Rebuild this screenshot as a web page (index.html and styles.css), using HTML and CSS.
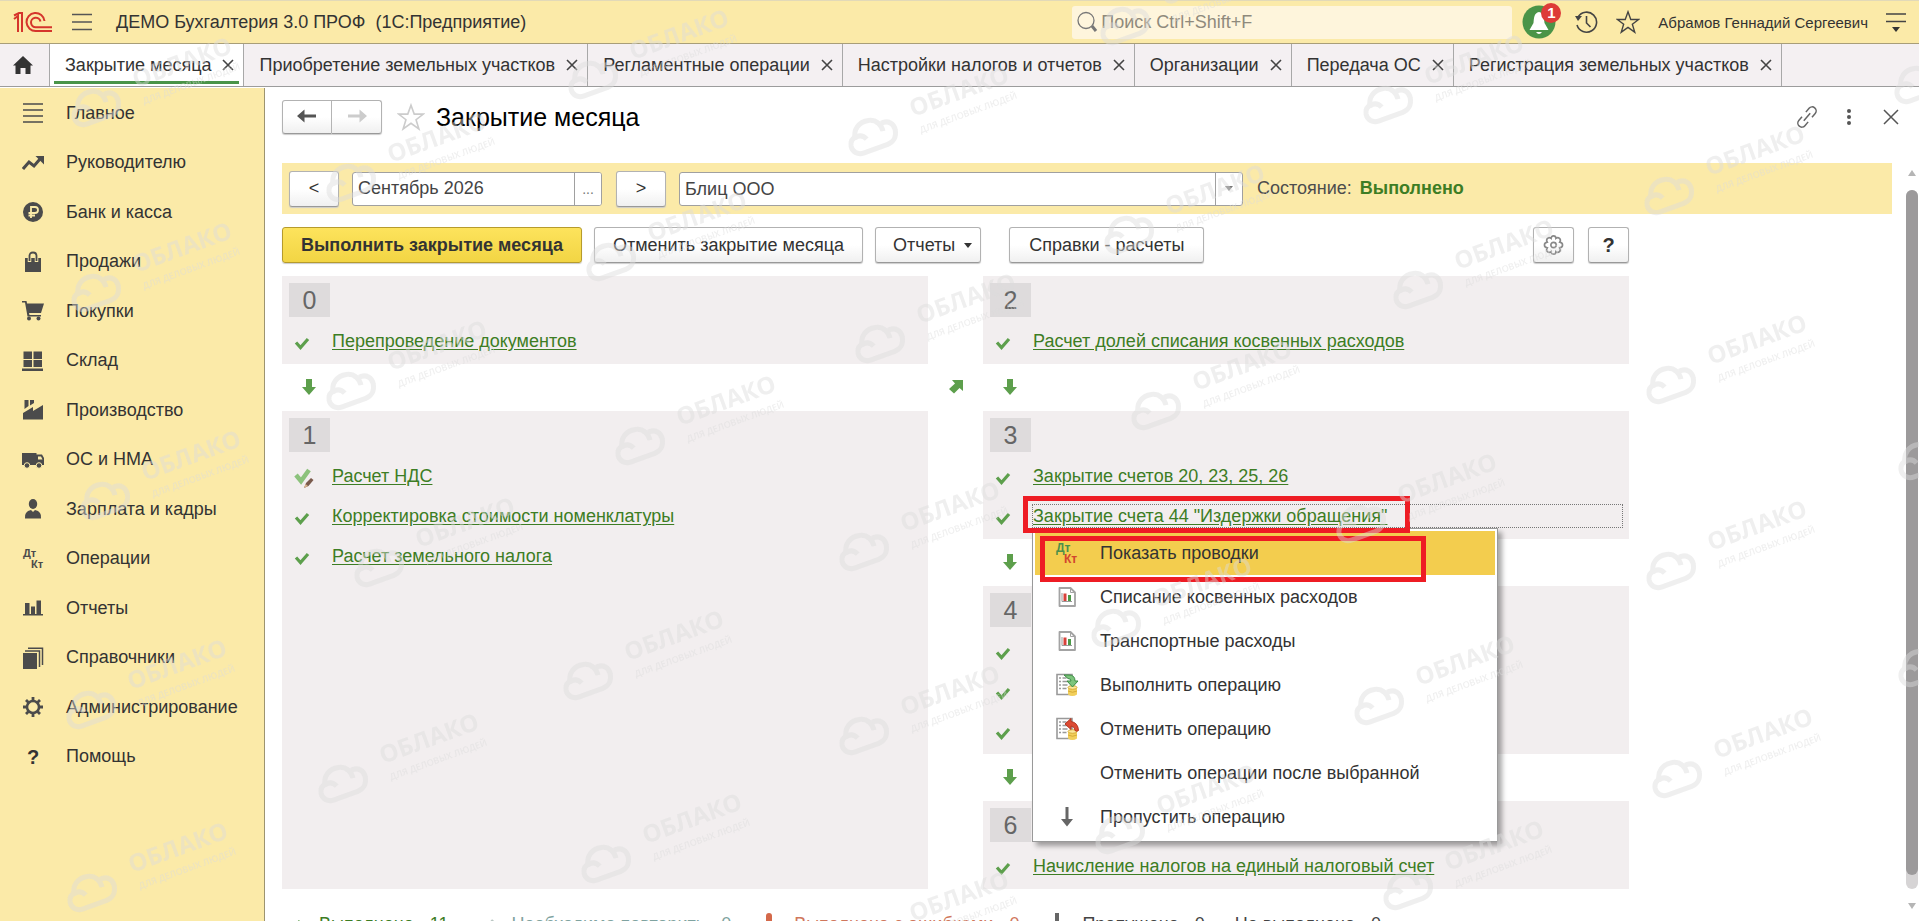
FILE: index.html
```html
<!DOCTYPE html>
<html lang="ru">
<head>
  <meta charset="UTF-8">
  <meta name="viewport" content="width=device-width, initial-scale=1.0">
  <title>Закрытие месяца - ДЕМО Бухгалтерия 3.0 ПРОФ</title>
  <link rel="stylesheet" href="styles.css">
</head>
<body>
  <!-- shared icons -->
  <svg class="sprite" aria-hidden="true">
    <symbol id="i-check" viewBox="0 0 16 16"><path d="M2 7.500l4.500 5L14 4" fill="none" stroke="#5d9f4c" stroke-width="3.200"/></symbol>
    <symbol id="i-down" viewBox="0 0 16 18"><path d="M5 1h6v8h4l-7 8-7-8h4z" fill="#5d9f4c"/></symbol>
    <symbol id="i-close" viewBox="0 0 12 12"><path d="M1 1l10 10M11 1L1 11" fill="none" stroke="#444" stroke-width="1.600"/></symbol>
    <symbol id="i-star" viewBox="0 0 26 26"><path d="M13 2l3 8.300h8.500l-6.800 5.200 2.600 8.500-7.300-5.200-7.300 5.200 2.600-8.500L1.500 10.300H10z" fill="none" stroke="currentColor" stroke-width="1.500"/></symbol>
    <symbol id="i-report" viewBox="0 0 24 24"><path d="M4.500 3h11l4.500 4.500V21H4.500z" fill="#fff" stroke="#a3a3a3" stroke-width="1.800" stroke-linejoin="round"/><path d="M15.500 3v4.500H20" fill="none" stroke="#a3a3a3"/><path d="M7 8v8.500h10" fill="none" stroke="#999"/><path d="M8.500 8.500h3V16h-3z" fill="#d8423b"/><path d="M13 10h3v6h-3z" fill="#4c9a48"/></symbol>
    <symbol id="i-sheet" viewBox="0 0 24 24"><path d="M2 1.500h15v20H2z" fill="#fff" stroke="#999" stroke-width="1.600"/><path d="M4 5h2M4 8.500h2M4 12h2M4 15.500h2M7.500 5h4M7.500 8.500h5M7.500 12h5M7.500 15.500h4" stroke="#999" stroke-width="1.300"/><path d="M13 14.500h9v7q-4.500 3-9 0z" fill="#f2cf5b"/><ellipse cx="17.500" cy="14.500" rx="4.500" ry="1.800" fill="#fbe79b" stroke="#d6ab36"/><path d="M13 18q4.500 2.500 9 0" fill="none" stroke="#d6ab36"/></symbol>
  </svg>

  <header class="titlebar">
    <svg class="logo" viewBox="0 0 40 21" width="40" height="21"><g fill="none" stroke="#d5352c" stroke-width="2"><path d="M1 7l4-3v16M1 3.500L6 1h3v19"/><path d="M31.500 9A9 9 0 1 0 23 19h16"/><path d="M27.500 9.500A4.800 4.800 0 1 0 23 15.300h16"/></g></svg>
    <button class="icon-btn burger" aria-label="Меню"><svg width="20" height="18" viewBox="0 0 20 18"><path d="M0 1.500h20M0 9h20M0 16.500h20" stroke="#555" stroke-width="1.600"/></svg></button>
    <span class="app-name">ДЕМО Бухгалтерия 3.0 ПРОФ&nbsp; (1С:Предприятие)</span>
    <label class="search">
      <svg width="22" height="22" viewBox="0 0 22 22"><circle cx="10" cy="9.500" r="8" fill="none" stroke="#777" stroke-width="1.300"/><path d="M16 15l4 5" stroke="#777" stroke-width="3"/></svg>
      <input type="text" placeholder="Поиск Ctrl+Shift+F" aria-label="Поиск">
    </label>
    <div class="tools">
      <button class="icon-btn bell" aria-label="Уведомления">
        <svg width="34" height="34" viewBox="0 0 34 34"><circle cx="17" cy="17" r="16.500" fill="#4a9448"/><path d="M17 7c5 1 5 6 5.500 11l4 7H7.500l4-7C12 13 12 8 17 7zM14 27h6q-3 4-6 0z" fill="#fff"/></svg>
        <span class="bell-count">1</span>
      </button>
      <button class="icon-btn" aria-label="История"><svg width="24" height="24" viewBox="0 0 24 24"><path d="M4 7a10 10 0 1 1-1 8M12.500 6v7l4 4" fill="none" stroke="#444" stroke-width="1.600"/><path d="M1 6h7l-4 5z" fill="#444"/></svg></button>
      <button class="icon-btn" aria-label="Избранное"><svg width="24" height="24"><use href="#i-star"/></svg></button>
      <a class="user" href="#">Абрамов Геннадий Сергеевич</a>
      <button class="icon-btn" aria-label="Сервис"><svg width="20" height="20" viewBox="0 0 20 20"><path d="M0 2h20M0 9.500h20" stroke="#444" stroke-width="1.600"/><path d="M6 15h8l-4 5z" fill="#333"/></svg></button>
    </div>
  </header>

  <nav class="tabs">
    <a class="home" href="#" aria-label="Начальная страница"><svg width="20" height="18" viewBox="0 0 20 18"><path d="M10 0l10 9.500h-2.500V18H12.500v-6h-5v6h-5V9.500H0z" fill="#333"/></svg></a>
    <a class="tab active" href="#">Закрытие месяца<svg><use href="#i-close"/></svg></a>
    <a class="tab" href="#">Приобретение земельных участков<svg><use href="#i-close"/></svg></a>
    <a class="tab" href="#">Регламентные операции<svg><use href="#i-close"/></svg></a>
    <a class="tab" href="#">Настройки налогов и отчетов<svg><use href="#i-close"/></svg></a>
    <a class="tab" href="#">Организации<svg><use href="#i-close"/></svg></a>
    <a class="tab" href="#">Передача ОС<svg><use href="#i-close"/></svg></a>
    <a class="tab" href="#">Регистрация земельных участков<svg><use href="#i-close"/></svg></a>
  </nav>

  <div class="workspace">
    <nav class="sidebar">
      <a href="#"><svg viewBox="0 0 22 22"><path d="M1 2h20M1 8h20M1 14h20M1 20h20" stroke="#4b4b4b" stroke-width="1.500"/></svg>Главное</a>
      <a href="#"><svg viewBox="0 0 22 22"><path d="M1 17l6-7 5 4 6-7" fill="none" stroke="#4b4b4b" stroke-width="3"/><path d="M13.500 4H22v8.500z" fill="#4b4b4b"/></svg>Руководителю</a>
      <a href="#"><svg viewBox="0 0 22 22"><circle cx="11" cy="11" r="10" fill="#4b4b4b"/><path d="M9 17V6h4a3 3 0 0 1 0 6H6.500M6.500 14.500H13" fill="none" stroke="#fbeba9" stroke-width="1.800"/></svg>Банк и касса</a>
      <a href="#"><svg viewBox="0 0 22 22"><path d="M3 7h16v14H3z" fill="#4b4b4b"/><path d="M7.500 11V5q0-3.500 3.500-3.500T14.500 5v6" fill="none" stroke="#fbeba9" stroke-width="3.500"/><path d="M7.500 10V5q0-3.500 3.500-3.500T14.500 5v5" fill="none" stroke="#4b4b4b" stroke-width="1.800"/></svg>Продажи</a>
      <a href="#"><svg viewBox="0 0 22 22"><path d="M0 1h4.500l.6 2.500H22L19 13H7l.5 2H19v1.500H5.500L3 2.500H0z" fill="#4b4b4b"/><circle cx="7" cy="18.500" r="2" fill="#4b4b4b"/><circle cx="16.500" cy="18.500" r="2" fill="#4b4b4b"/></svg>Покупки</a>
      <a href="#"><svg viewBox="0 0 22 22"><path d="M1.500 1.500h8.500V9H1.500zM11.500 1.500H20V9h-8.500zM1.500 10h8.500v7H1.500zM11.500 10H20v7h-8.500zM0 18.500h21V21H0z" fill="#4b4b4b"/></svg>Склад</a>
      <a href="#"><svg viewBox="0 0 22 22"><path d="M1 20.500V14l10-6v4l10-6v14.500zM2.500 1h4v6l-4 3zM8 1h4v3L8 6.500z" fill="#4b4b4b"/></svg>Производство</a>
      <a href="#"><svg viewBox="0 0 22 22"><path d="M0 4h14.500v12H0zM14 5.500h6L22 9v7h-8z" fill="#4b4b4b"/><path d="M16 7.500h3l1.500 3H16z" fill="#fbeba9"/><circle cx="5" cy="16.500" r="2.800" fill="#4b4b4b" stroke="#fbeba9"/><circle cx="17" cy="16.500" r="2.800" fill="#4b4b4b" stroke="#fbeba9"/></svg>ОС и НМА</a>
      <a href="#"><svg viewBox="0 0 22 22"><ellipse cx="11" cy="6" rx="4.200" ry="5" fill="#4b4b4b"/><path d="M3 20.500q-1-7 6-8.500l2 2 2-2q7 1.500 6 8.500z" fill="#4b4b4b"/></svg>Зарплата и кадры</a>
      <a href="#"><svg viewBox="0 0 22 22" class="dtkt"><text x="1" y="9">Дт</text><text x="9" y="20">Кт</text></svg>Операции</a>
      <a href="#"><svg viewBox="0 0 22 22"><path d="M1 17h20v1.500H1zM3 6h4.500v11H3zM9 9.500h4V17H9zM14.500 3.500H19V17h-4.500z" fill="#4b4b4b"/></svg>Отчеты</a>
      <a href="#"><svg viewBox="0 0 22 22"><path d="M1 6h14v16H1z" fill="#4b4b4b"/><path d="M3 4h14.500v16M6 1.200h14.500V18" fill="none" stroke="#4b4b4b" stroke-width="1.500"/></svg>Справочники</a>
      <a href="#"><svg viewBox="0 0 22 22"><circle cx="11" cy="11" r="6" fill="none" stroke="#4b4b4b" stroke-width="2.500"/><path d="M11 1v4M11 17v4M1 11h4M17 11h4M4 4l2.500 2.500M15.500 15.500L18 18M18 4l-2.500 2.500M6.500 15.500L4 18" stroke="#4b4b4b" stroke-width="2.800"/></svg>Администрирование</a>
      <a href="#"><span class="help-mark">?</span>Помощь</a>
    </nav>

    <main class="page">
      <div class="page-head">
        <div class="history-btns">
          <button class="btn" aria-label="Назад"><svg width="20" height="14" viewBox="0 0 20 14"><path d="M0 7l7.500-6.500V5.500H19v3H7.500v5z" fill="#555"/></svg></button>
          <button class="btn" aria-label="Вперед" disabled><svg width="20" height="14" viewBox="0 0 20 14"><path d="M20 7l-7.500-6.500V5.500H1v3h11.500v5z" fill="#ccc"/></svg></button>
        </div>
        <svg class="fav" width="28" height="28"><use href="#i-star"/></svg>
        <h1>Закрытие месяца</h1>
        <div class="page-actions">
          <button class="icon-btn" aria-label="Ссылка"><svg width="22" height="22" viewBox="0 0 22 22"><g fill="none" stroke="#666" stroke-width="1.500" transform="rotate(-50 11 11)"><path d="M8 7H3a4 4 0 0 0 0 8h5M14 7h5a4 4 0 0 1 0 8h-5M6 11h10"/></g></svg></button>
          <button class="icon-btn" aria-label="Еще"><svg width="22" height="22" viewBox="0 0 22 22"><g fill="#555"><circle cx="11" cy="5" r="2"/><circle cx="11" cy="11" r="2"/><circle cx="11" cy="17" r="2"/></g></svg></button>
          <button class="icon-btn" aria-label="Закрыть"><svg width="22" height="22" viewBox="0 0 22 22"><path d="M4 4l14 14M18 4L4 18" stroke="#555" stroke-width="1.500"/></svg></button>
        </div>
      </div>

      <div class="period-bar">
        <button class="btn step">&lt;</button>
        <div class="field period">
          <input type="text" value="Сентябрь 2026" aria-label="Период">
          <button>...</button>
        </div>
        <button class="btn step">&gt;</button>
        <div class="field company">
          <select aria-label="Организация"><option>Блиц ООО</option></select>
          <span class="caret"></span>
        </div>
        <span class="state">Состояние: <b>Выполнено</b></span>
      </div>

      <div class="commands">
        <button class="btn primary">Выполнить закрытие месяца</button>
        <button class="btn">Отменить закрытие месяца</button>
        <button class="btn drop">Отчеты <span class="caret dark"></span></button>
        <button class="btn refs">Справки - расчеты</button>
        <button class="btn square gear" aria-label="Настройки"><svg width="22" height="22" viewBox="0 0 22 22"><g fill="none" stroke="#888" stroke-width="1.700"><circle cx="11" cy="11" r="2.800"/><path d="M8.500 4q0-2.500 2.500-2.500T13.500 4q2-1.500 3.800 0t.2 4q3 .5 3 3t-3 3q1.500 2.500-.2 4t-3.800 0q0 2.500-2.500 2.500T8.500 18q-2 1.500-3.800 0t-.2-4q-3-.5-3-3t3-3q-1.500-2.500.2-4t3.800 0z"/></g></svg></button>
        <button class="btn square"><b>?</b></button>
      </div>

      <div class="steps">
        <div class="col">
          <section class="stage">
            <span class="num">0</span>
            <ul>
              <li><svg><use href="#i-check"/></svg><a href="#">Перепроведение документов</a></li>
            </ul>
          </section>
          <div class="next"><svg><use href="#i-down"/></svg></div>
          <section class="stage grow">
            <span class="num">1</span>
            <ul>
              <li><svg class="edited" viewBox="0 0 20 22"><path d="M2 8l5 6L15 3" fill="none" stroke="#8cc27c" stroke-width="4.500"/><path d="M10 21l2-5 5-5 2.500 2-5 6z" fill="#7a5a4c"/><path d="M10 21l1.500-4 2.500 2z" fill="#d9b28c"/></svg><a href="#">Расчет НДС</a></li>
              <li><svg><use href="#i-check"/></svg><a href="#">Корректировка стоимости номенклатуры</a></li>
              <li><svg><use href="#i-check"/></svg><a href="#">Расчет земельного налога</a></li>
            </ul>
          </section>
        </div>

        <div class="across"><svg width="16" height="16" viewBox="0 0 16 16"><path d="M4 2h11v11l-3.500-3L6 15.500 1 11l6-5.500z" fill="#5d9f4c"/></svg></div>

        <div class="col">
          <section class="stage">
            <span class="num">2</span>
            <ul>
              <li><svg><use href="#i-check"/></svg><a href="#">Расчет долей списания косвенных расходов</a></li>
            </ul>
          </section>
          <div class="next"><svg><use href="#i-down"/></svg></div>
          <section class="stage">
            <span class="num">3</span>
            <ul>
              <li><svg><use href="#i-check"/></svg><a href="#">Закрытие счетов 20, 23, 25, 26</a></li>
              <li class="current">
                <svg><use href="#i-check"/></svg><a href="#">Закрытие счета 44 "Издержки обращения"</a>
                <div class="menu" role="menu">
                  <button class="selected"><svg viewBox="0 0 24 24" class="dtkt color"><text x="1" y="11">Дт</text><text x="9" y="22">Кт</text></svg>Показать проводки</button>
                  <button><svg><use href="#i-report"/></svg>Списание косвенных расходов</button>
                  <button><svg><use href="#i-report"/></svg>Транспортные расходы</button>
                  <button><svg viewBox="0 0 24 24"><use href="#i-sheet"/><path d="M9 2h5q6 0 6 6h3l-5.500 6L12 8h4q0-2.500-3-2.500z" fill="#7cc47c" stroke="#3a8d42"/></svg>Выполнить операцию</button>
                  <button><svg viewBox="0 0 24 24"><use href="#i-sheet"/><path d="M10 7l6-5.500v3q7 1 7.500 9-2 1.500-3.500 0 0-4-4-4.500v3.500z" fill="#dc4a33" stroke="#b5341f"/></svg>Отменить операцию</button>
                  <button><svg></svg>Отменить операции после выбранной</button>
                  <button><svg viewBox="0 0 24 24"><path d="M10.500 2h3v12H18l-6 7.500L6 14h4.500z" fill="#666"/></svg>Пропустить операцию</button>
                </div>
                <span class="mark mark-link"></span>
                <span class="mark mark-item"></span>
              </li>
            </ul>
          </section>
          <div class="next"><svg><use href="#i-down"/></svg></div>
          <section class="stage">
            <span class="num">4</span>
            <ul>
              <li><svg><use href="#i-check"/></svg></li>
              <li><svg><use href="#i-check"/></svg></li>
              <li><svg><use href="#i-check"/></svg></li>
            </ul>
          </section>
          <div class="next"><svg><use href="#i-down"/></svg></div>
          <section class="stage">
            <span class="num">6</span>
            <ul>
              <li><svg><use href="#i-check"/></svg><a href="#">Начисление налогов на единый налоговый счет</a></li>
            </ul>
          </section>
        </div>
      </div>

      <div class="legend">
        <span class="done"><svg><use href="#i-check"/></svg>Выполнено - 11</span>
        <span class="repeat"><svg viewBox="0 0 16 16"><path d="M1 8l5 5 9-10" fill="none" stroke="#b9c6c2" stroke-width="2.500"/></svg>Необходимо повторить - 0</span>
        <span class="error"><svg viewBox="0 0 16 24"><rect x="5" y="0" width="6" height="15" rx="3" fill="#d4694a"/><circle cx="8" cy="20" r="3" fill="#d4694a"/></svg>Выполнено с ошибками - 0</span>
        <span class="skipped"><svg viewBox="0 0 16 24"><path d="M6 0h4v14h4l-6 8-6-8h4z" fill="#666"/></svg>Пропущено - 0</span>
        <span>Не выполнено - 0</span>
      </div>

      <div class="scroll" aria-hidden="true">
        <span class="up"></span>
        <span class="track"><span class="thumb"></span></span>
        <span class="down"></span>
      </div>
    </main>
  </div>

  <svg class="watermark" aria-hidden="true">
    <defs>
      <g id="wm">
        <g fill="none" stroke="#dcdcdc" stroke-width="5" transform="rotate(-20)">
          <path d="M-17-5C-16-16-7-21 2-19c8 2 11 9 10 15"/>
          <path d="M13-12c8-1 12 5 11 11-1 7-6 11-12 11h-25c-7 0-11-5-10-11 2-9 14-9 17-1"/>
        </g>
        <g fill="#dcdcdc" transform="translate(40 -22) rotate(-20)">
          <text class="wm-big">ОБЛАКО</text>
          <text class="wm-small" x="2" y="18">ДЛЯ ДЕЛОВЫХ ЛЮДЕЙ</text>
        </g>
      </g>
    </defs>
    <use href="#wm" x="96" y="110"/><use href="#wm" x="96" y="295"/><use href="#wm" x="105" y="503"/><use href="#wm" x="91" y="712"/><use href="#wm" x="92" y="895"/>
    <use href="#wm" x="351" y="185"/><use href="#wm" x="351" y="393"/><use href="#wm" x="379" y="570"/><use href="#wm" x="343" y="786"/>
    <use href="#wm" x="593" y="82"/><use href="#wm" x="611" y="264"/><use href="#wm" x="640" y="448"/><use href="#wm" x="588" y="683"/><use href="#wm" x="606" y="866"/>
    <use href="#wm" x="873" y="139"/><use href="#wm" x="880" y="346"/><use href="#wm" x="864" y="554"/><use href="#wm" x="864" y="738"/><use href="#wm" x="873" y="944"/>
    <use href="#wm" x="1125" y="28"/><use href="#wm" x="1129" y="237"/><use href="#wm" x="1156" y="413"/><use href="#wm" x="1116" y="630"/><use href="#wm" x="1120" y="837"/>
    <use href="#wm" x="1388" y="107"/><use href="#wm" x="1418" y="292"/><use href="#wm" x="1361" y="526"/><use href="#wm" x="1379" y="708"/><use href="#wm" x="1408" y="893"/>
    <use href="#wm" x="1669" y="198"/><use href="#wm" x="1671" y="387"/><use href="#wm" x="1671" y="573"/><use href="#wm" x="1677" y="781"/>
    <use href="#wm" x="1919" y="87"/><use href="#wm" x="1923" y="463"/><use href="#wm" x="1923" y="670"/>
  </svg>
</body>
</html>
```
FILE: styles.css
```css
* {
  box-sizing: border-box;
  margin: 0;
  padding: 0;
}

body {
  display: flex;
  flex-direction: column;
  height: 100vh;
  overflow: hidden;
  font-family: "Liberation Sans", Arial, sans-serif;
  font-size: 18px;
  color: #333;
  background: #fff;
}

button, input, select {
  font: inherit;
  color: inherit;
}

a {
  color: inherit;
  text-decoration: none;
}

.sprite {
  position: absolute;
  width: 0;
  height: 0;
}

.icon-btn {
  display: flex;
  border: none;
  background: none;
}

/* title bar */
.titlebar {
  display: flex;
  align-items: center;
  flex: none;
  height: 44px;
  padding: 0 13px;
  background: #fbeaa8;
  border-top: 1px solid #e2d9b8;
  border-bottom: 1px solid #a89e78;
}

.burger {
  margin: 0 24px 0 19px;
}

.app-name {
  white-space: nowrap;
}

.search {
  display: flex;
  align-items: center;
  gap: 3px;
  width: 440px;
  height: 33px;
  margin-left: auto;
  padding-left: 4px;
  background: #fef5dc;
  border-radius: 3px;
}

.search input {
  flex: 1;
  min-width: 0;
  border: none;
  background: none;
}

.search input::placeholder {
  color: #8f8a7c;
}

.tools {
  display: flex;
  align-items: center;
  gap: 18px;
  margin-left: 10px;
  color: #444;
}

.bell {
  position: relative;
}

.bell-count {
  position: absolute;
  top: -2px;
  right: -5px;
  width: 20px;
  height: 20px;
  border-radius: 50%;
  background: #dd3b38;
  color: #fff;
  font-size: 15px;
  font-weight: bold;
  line-height: 20px;
}

.user {
  font-size: 15px;
  color: #333;
  white-space: nowrap;
}

/* tabs */
.tabs {
  display: flex;
  flex: none;
  height: 43px;
  background: #f4f0f2;
  border-bottom: 1px solid #9c9c9c;
}

.home {
  display: flex;
  align-items: center;
  justify-content: center;
  width: 50px;
  padding-right: 4px;
  border-right: 1px solid #a8a8a8;
}

.tab {
  position: relative;
  display: flex;
  align-items: center;
  gap: 11px;
  padding: 0 9px 0 15px;
  border-right: 1px solid #a8a8a8;
  white-space: nowrap;
}

.tab svg {
  width: 12px;
  height: 12px;
}

.tab.active {
  background: #fff;
}

.tab.active::after {
  content: "";
  position: absolute;
  left: 4px;
  right: 4px;
  bottom: 2px;
  height: 3px;
  background: #4a9448;
}

/* layout */
.workspace {
  display: flex;
  flex: 1;
  min-height: 0;
}

.sidebar {
  flex: none;
  width: 265px;
  margin-top: 1px;
  background: #fbeaa8;
  border-right: 1px solid #9d946f;
}

.sidebar a {
  display: flex;
  align-items: center;
  gap: 22px;
  height: 50px;
  padding-left: 22px;
}

.sidebar a:nth-child(even) {
  height: 49px;
}

.sidebar svg,
.help-mark {
  width: 22px;
  height: 22px;
}

.help-mark {
  font-weight: bold;
  font-size: 20px;
  line-height: 22px;
  text-align: center;
}

.dtkt text {
  font-size: 11px;
  font-weight: bold;
  fill: #4b4b4b;
}

.dtkt.color text {
  font-size: 12px;
  fill: #4c8f4a;
}

.dtkt.color text + text {
  fill: #d2452f;
}

.page {
  position: relative;
  flex: 1;
  min-width: 0;
  padding: 12px 27px 0 17px;
}

.page-head {
  display: flex;
  align-items: center;
  height: 36px;
}

.btn {
  height: 36px;
  padding: 0 18px;
  border: 1px solid #b2b2b2;
  border-bottom-color: #999;
  border-radius: 3px;
  background: linear-gradient(#fff 50%, #f0f0f0);
  box-shadow: 0 1px 1px #ccc;
  white-space: nowrap;
}

.history-btns {
  display: flex;
}

.history-btns .btn {
  width: 50px;
  height: 34px;
  padding: 0 14px;
  border-radius: 3px 0 0 3px;
}

.history-btns .btn + .btn {
  border-left: none;
  border-radius: 0 3px 3px 0;
}

.fav {
  margin: 0 11px 0 15px;
  color: #ccc;
}

h1 {
  font-size: 25px;
  font-weight: normal;
  color: #000;
}

.page-actions {
  display: flex;
  gap: 20px;
  margin: 0 -10px 0 auto;
}

/* period and company */
.period-bar {
  display: flex;
  align-items: center;
  height: 51px;
  margin-top: 28px;
  padding-left: 7px;
  background: #fbeaa8;
}

.step {
  width: 50px;
  padding: 0;
}

.field {
  display: flex;
  height: 34px;
  border: 1px solid #a0a0a0;
  border-radius: 3px;
  background: #fff;
  overflow: hidden;
}

.field input,
.field select {
  flex: 1;
  min-width: 0;
  padding-left: 5px;
  border: none;
  background: none;
  color: #444;
  appearance: none;
}

.field button {
  width: 27px;
  border: none;
  border-left: 1px solid #a0a0a0;
  background: #fff;
  font-size: 14px;
  color: #777;
}

.period {
  width: 250px;
  margin: 0 14px 0 13px;
}

.company {
  width: 564px;
  margin: 0 14px 0 13px;
}

.caret {
  display: flex;
  align-items: center;
  justify-content: center;
}

.company .caret {
  width: 27px;
  border-left: 1px solid #a0a0a0;
}

.caret::after {
  content: "";
  border: 4px solid transparent;
  border-top: 5px solid #777;
  border-bottom: none;
}

.caret.dark::after {
  border-top-color: #333;
}

.state {
  color: #4d4d4d;
  white-space: nowrap;
}

.state b {
  margin-left: 3px;
  color: #3d7d24;
}

/* command bar */
.commands {
  display: flex;
  gap: 12px;
  max-width: 1347px;
  margin-top: 13px;
}

.btn.primary {
  border-color: #b69b2c;
  background: linear-gradient(#fde35c, #f2d544);
  font-weight: bold;
}

.btn.drop {
  display: flex;
  align-items: center;
  gap: 9px;
  padding: 0 8px 0 17px;
}

.btn.refs {
  margin-left: 16px;
  padding: 0 19px;
}

.btn.square {
  width: 41px;
  padding: 0 9px;
}

.btn.square b {
  font-size: 20px;
}

.btn.gear {
  display: flex;
  align-items: center;
  margin: 0 2px 0 auto;
}

/* closing stages */
.steps {
  display: flex;
  max-width: 1347px;
  margin-top: 13px;
}

.col {
  display: flex;
  flex: 1;
  flex-direction: column;
}

.stage {
  padding: 7px 7px 3px;
  background: #f2eeef;
}

.stage.grow {
  flex: 1;
}

.num {
  display: block;
  width: 41px;
  height: 34px;
  margin-bottom: 4px;
  background: #dedbdc;
  color: #666;
  font-size: 25px;
  line-height: 34px;
  text-align: center;
}

.stage ul {
  list-style: none;
}

.stage li {
  display: flex;
  align-items: center;
  height: 40px;
  padding-left: 5px;
}

.stage li > svg {
  flex: none;
  width: 16px;
  height: 16px;
  margin: 4px 22px 0 0;
}

.stage li > .edited {
  width: 20px;
  height: 22px;
  margin-right: 18px;
}

.stage li > a {
  flex: 1;
  line-height: 22px;
  color: #3d7d24;
  text-decoration: underline;
  text-underline-offset: 2px;
  white-space: nowrap;
}

.next {
  height: 47px;
  padding: 14px 0 0 19px;
}

.next svg {
  width: 16px;
  height: 18px;
}

.across {
  width: 55px;
  padding-top: 102px;
  text-align: center;
}

.current {
  position: relative;
}

.current > a {
  outline: 1px dotted #777;
}

/* context menu */
.menu {
  position: absolute;
  z-index: 2;
  top: 32px;
  left: 42px;
  width: 466px;
  padding: 2px;
  border: 1px solid #999;
  background: #fff;
  box-shadow: 4px 4px 5px rgba(0, 0, 0, 0.35);
}

.menu button {
  display: flex;
  align-items: center;
  gap: 21px;
  width: 100%;
  height: 44px;
  padding-left: 20px;
  border: none;
  background: none;
  text-align: left;
}

.menu .selected {
  background: #f3cd4e;
}

.menu svg {
  width: 24px;
  height: 24px;
}

.mark {
  position: absolute;
  z-index: 3;
  border: 5px solid #ee1c24;
  pointer-events: none;
}

.mark-link {
  top: 0;
  left: 33px;
  width: 387px;
  height: 37px;
}

.mark-item {
  top: 40px;
  left: 50px;
  width: 386px;
  height: 46px;
}

/* legend */
.legend {
  display: flex;
  gap: 30px;
  margin-top: 24px;
  line-height: 22px;
  color: #444;
  white-space: nowrap;
}

.legend span {
  display: flex;
}

.legend svg {
  width: 16px;
  height: 24px;
  margin-right: 17px;
}

.legend .done {
  padding-left: 4px;
  color: #3d7d24;
}

.legend .repeat {
  color: #7fa3a0;
}

.legend .error {
  color: #d0775c;
}

/* vertical scroll */
.scroll {
  position: absolute;
  top: 83px;
  right: 1px;
  bottom: 12px;
  display: flex;
  flex-direction: column;
  align-items: center;
  gap: 14px;
  width: 12px;
}

.track {
  flex: 1;
  width: 12px;
  border-radius: 6px;
  background: #d6d4d5;
}

.thumb {
  display: block;
  height: 98%;
  border-radius: 6px;
  background: #9c9a9b;
}

.up,
.down {
  border: 4px solid transparent;
}

.up {
  border-top: none;
  border-bottom: 6px solid #b5b5b5;
}

.down {
  border-top: 6px solid #b5b5b5;
  border-bottom: none;
}

.watermark {
  position: fixed;
  z-index: 10;
  inset: 0;
  width: 100%;
  height: 100%;
  opacity: 0.45;
  pointer-events: none;
}

.wm-big {
  font: 700 24px "Open Sans", sans-serif;
}

.wm-small {
  font: 600 9px "Open Sans", sans-serif;
}
```
